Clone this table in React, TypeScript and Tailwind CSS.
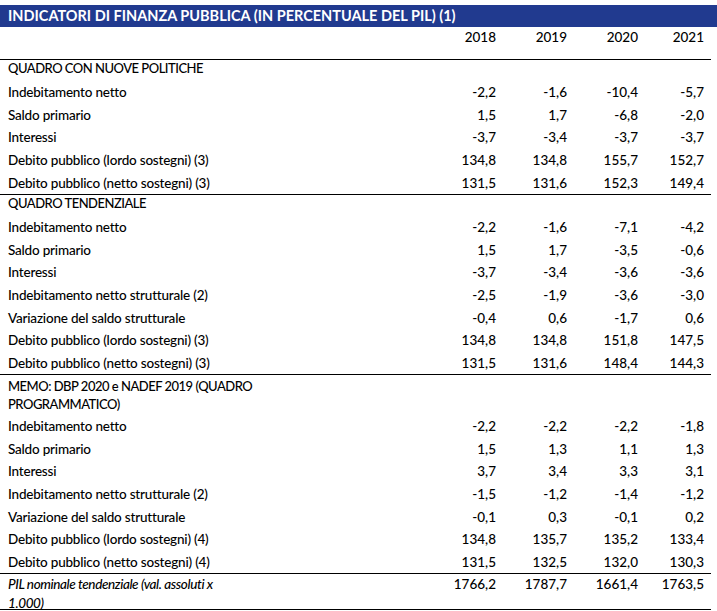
import React from "react";

type Section = {
  title: React.ReactNode;
  tall?: boolean;
  rows: [string, string[]][];
};

const sections: Section[] = [
  {
    title: "QUADRO CON NUOVE POLITICHE",
    rows: [
      ["Indebitamento netto", ["-2,2", "-1,6", "-10,4", "-5,7"]],
      ["Saldo primario", ["1,5", "1,7", "-6,8", "-2,0"]],
      ["Interessi", ["-3,7", "-3,4", "-3,7", "-3,7"]],
      ["Debito pubblico (lordo sostegni) (3)", ["134,8", "134,8", "155,7", "152,7"]],
      ["Debito pubblico (netto sostegni) (3)", ["131,5", "131,6", "152,3", "149,4"]],
    ],
  },
  {
    title: "QUADRO TENDENZIALE",
    rows: [
      ["Indebitamento netto", ["-2,2", "-1,6", "-7,1", "-4,2"]],
      ["Saldo primario", ["1,5", "1,7", "-3,5", "-0,6"]],
      ["Interessi", ["-3,7", "-3,4", "-3,6", "-3,6"]],
      ["Indebitamento netto strutturale (2)", ["-2,5", "-1,9", "-3,6", "-3,0"]],
      ["Variazione del saldo strutturale", ["-0,4", "0,6", "-1,7", "0,6"]],
      ["Debito pubblico (lordo sostegni) (3)", ["134,8", "134,8", "151,8", "147,5"]],
      ["Debito pubblico (netto sostegni) (3)", ["131,5", "131,6", "148,4", "144,3"]],
    ],
  },
  {
    title: (
      <>
        <span className="block">MEMO: DBP 2020 e NADEF 2019 (QUADRO</span>
        <span className="block">PROGRAMMATICO)</span>
      </>
    ),
    tall: true,
    rows: [
      ["Indebitamento netto", ["-2,2", "-2,2", "-2,2", "-1,8"]],
      ["Saldo primario", ["1,5", "1,3", "1,1", "1,3"]],
      ["Interessi", ["3,7", "3,4", "3,3", "3,1"]],
      ["Indebitamento netto strutturale (2)", ["-1,5", "-1,2", "-1,4", "-1,2"]],
      ["Variazione del saldo strutturale", ["-0,1", "0,3", "-0,1", "0,2"]],
      ["Debito pubblico (lordo sostegni) (4)", ["134,8", "135,7", "135,2", "133,4"]],
      ["Debito pubblico (netto sostegni) (4)", ["131,5", "132,5", "132,0", "130,3"]],
    ],
  },
];

const Nums = ({ values }: { values: string[] }) => (
  <>
    <div className="w-[70px] text-right">{values[0]}</div>
    <div className="w-[71px] text-right">{values[1]}</div>
    <div className="w-[71px] text-right">{values[2]}</div>
    <div className="w-[66px] text-right">{values[3]}</div>
  </>
);

export default function App() {
  return (
    <div
      className="w-[717px] h-[611px] bg-white text-black text-[13.5px] font-medium overflow-hidden"
      style={{ fontFamily: "Lato, 'Open Sans', sans-serif" }}
    >
      <div className="pt-[5px]">
        <div className="h-[22px] bg-[#213a8f] text-white font-bold text-[14.5px] pl-2 flex items-center">
          INDICATORI DI FINANZA PUBBLICA (IN PERCENTUALE DEL PIL) (1)
        </div>
      </div>
      <div className="w-[711px]">
        <div className="h-[32px] flex items-start pt-[2px] pr-[7px] leading-[16px]">
          <div className="flex-1" />
          <Nums values={["2018", "2019", "2020", "2021"]} />
        </div>
        {sections.map((s, i) => (
          <div key={i} className="border-t border-black">
            <div
              className={
                s.tall
                  ? "h-[40px] pl-2 pt-[2px] leading-[18px] text-[13px] tracking-[-0.5px]"
                  : "h-[21px] pl-2 flex items-center pb-[4px] text-[13px] tracking-[-0.5px]"
              }
            >
              {s.title}
            </div>
            {s.rows.map(([label, values], j) => (
              <div key={j} className="h-[22.6px] flex items-center pr-[7px]">
                <div className="flex-1 pl-2 tracking-[-0.2px]">{label}</div>
                <Nums values={values} />
              </div>
            ))}
          </div>
        ))}
        <div className="border-t border-b border-black h-[37px] flex items-start pr-[7px] pt-[1px] leading-[19px]">
          <div className="flex-1 pl-2 italic tracking-[-0.4px]">
            <span className="block">PIL nominale tendenziale (val. assoluti x</span>
            <span className="block">1.000)</span>
          </div>
          <Nums values={["1766,2", "1787,7", "1661,4", "1763,5"]} />
        </div>
      </div>
    </div>
  );
}
